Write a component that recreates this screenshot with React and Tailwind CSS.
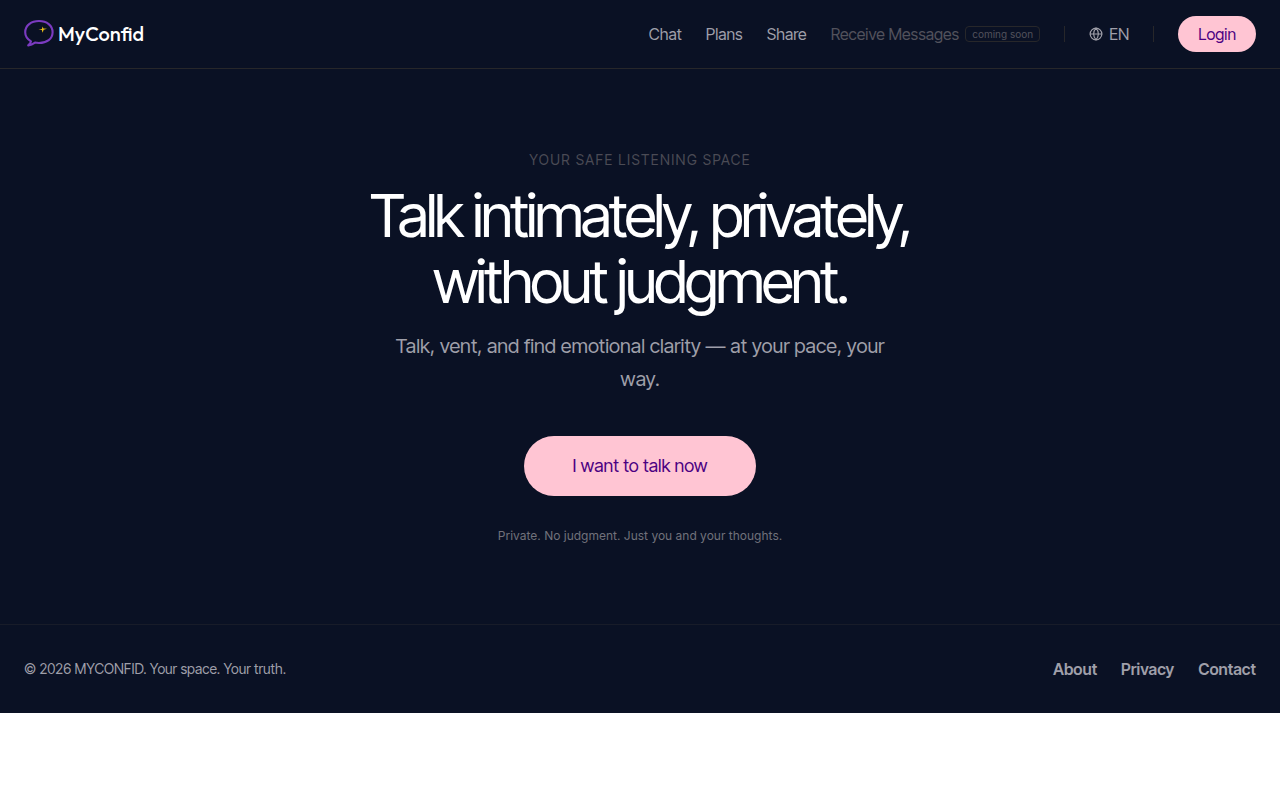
import { Globe } from "lucide-react";

const navLinks = [
  { label: "Chat", href: "#chat" },
  { label: "Plans", href: "#plans" },
  { label: "Share", href: "#share" },
];

const footerLinks = [
  { label: "About", href: "#about" },
  { label: "Privacy", href: "#privacy" },
  { label: "Contact", href: "#contact" },
];

// Speech bubble with a small gold spark
const LogoMark = () => (
  <svg className="h-8 w-8" viewBox="0 0 32 32" fill="none" aria-hidden="true">
    <path
      d="M7 23.400C3.200 21 1.200 17.800 1.200 14.200C1.200 7.500 7.200 3 15 3S28.600 7.500 28.600 14.200S22.800 25 15 25C13.500 25 12.200 24.900 11 24.600C9 26 6.800 27 4.200 27.400C5.600 26.200 6.800 25 7 23.400Z"
      stroke="#7b3bc0"
      strokeWidth="2.100"
      strokeLinecap="round"
      strokeLinejoin="round"
    />
    <path
      d="M18.700 8.500L19.400 10.600L23 10.800L19.600 11.800L18.700 14.700L17.800 12.100L14.500 11.900L17.900 10.900Z"
      fill="#f0c419"
    />
  </svg>
);

const Header = () => (
  <header className="border-b border-[#27272a]">
    <div className="flex items-center justify-between px-6 py-4">
      <a href="#home" className="flex items-center gap-0.5 text-white">
        <LogoMark />
        <span className="font-[Outfit,Lato,sans-serif] text-xl font-medium">MyConfid</span>
      </a>

      <nav className="flex items-center gap-6 text-[#9f9fa9]">
        {navLinks.map((link) => (
          <a key={link.label} href={link.href} className="hover:text-white">
            {link.label}
          </a>
        ))}
        <span className="flex items-center gap-1.5 text-[#52525c]">
          Receive Messages
          <span className="rounded border border-[#27272a] px-1.5 font-[Inter,sans-serif] text-[10px] leading-[14px]">
            coming soon
          </span>
        </span>
        <span className="h-4 w-px bg-[#27272a]" />
        <button type="button" className="flex items-center gap-1.5">
          <Globe size={14} />
          EN
        </button>
        <span className="h-4 w-px bg-[#27272a]" />
        <button type="button" className="rounded-full bg-[#ffc5d3] px-5 py-1.5 text-[#4b0082]">
          Login
        </button>
      </nav>
    </div>
  </header>
);

const Hero = () => (
  <main className="flex flex-col items-center px-6 py-20 text-center">
    <p className="text-sm leading-[21px] tracking-widest text-[#4b4b55] uppercase">
      Your safe listening space
    </p>
    <h1 className="mt-3 max-w-2xl text-[60px] leading-[66px] tracking-tighter text-white">
      Talk intimately, privately,
      <br />
      without judgment.
    </h1>
    <p className="mt-4 max-w-[500px] text-xl leading-[33px] text-[#9f9fa9]">
      Talk, vent, and find emotional clarity — at your pace, your way.
    </p>
    <button
      type="button"
      className="mt-10 rounded-full bg-[#ffc5d3] px-12 py-4 text-lg leading-7 text-[#4b0082]"
    >
      I want to talk now
    </button>
    <p className="mt-8 font-[Inter,sans-serif] text-xs text-[#71717b]">
      Private. No judgment. Just you and your thoughts.
    </p>
  </main>
);

const Footer = () => (
  <footer className="flex items-center justify-between border-t border-[#181c29] px-6 py-8 text-[#9f9fa9]">
    <p className="text-sm">© 2026 MYCONFID. Your space. Your truth.</p>
    <nav className="flex gap-6 font-semibold">
      {footerLinks.map((link) => (
        <a key={link.label} href={link.href} className="hover:text-white">
          {link.label}
        </a>
      ))}
    </nav>
  </footer>
);

export default function App() {
  return (
    <div className="bg-[#0a1124] font-['Inter_Tight',Inter,sans-serif] antialiased">
      <Header />
      <Hero />
      <Footer />
    </div>
  );
}
